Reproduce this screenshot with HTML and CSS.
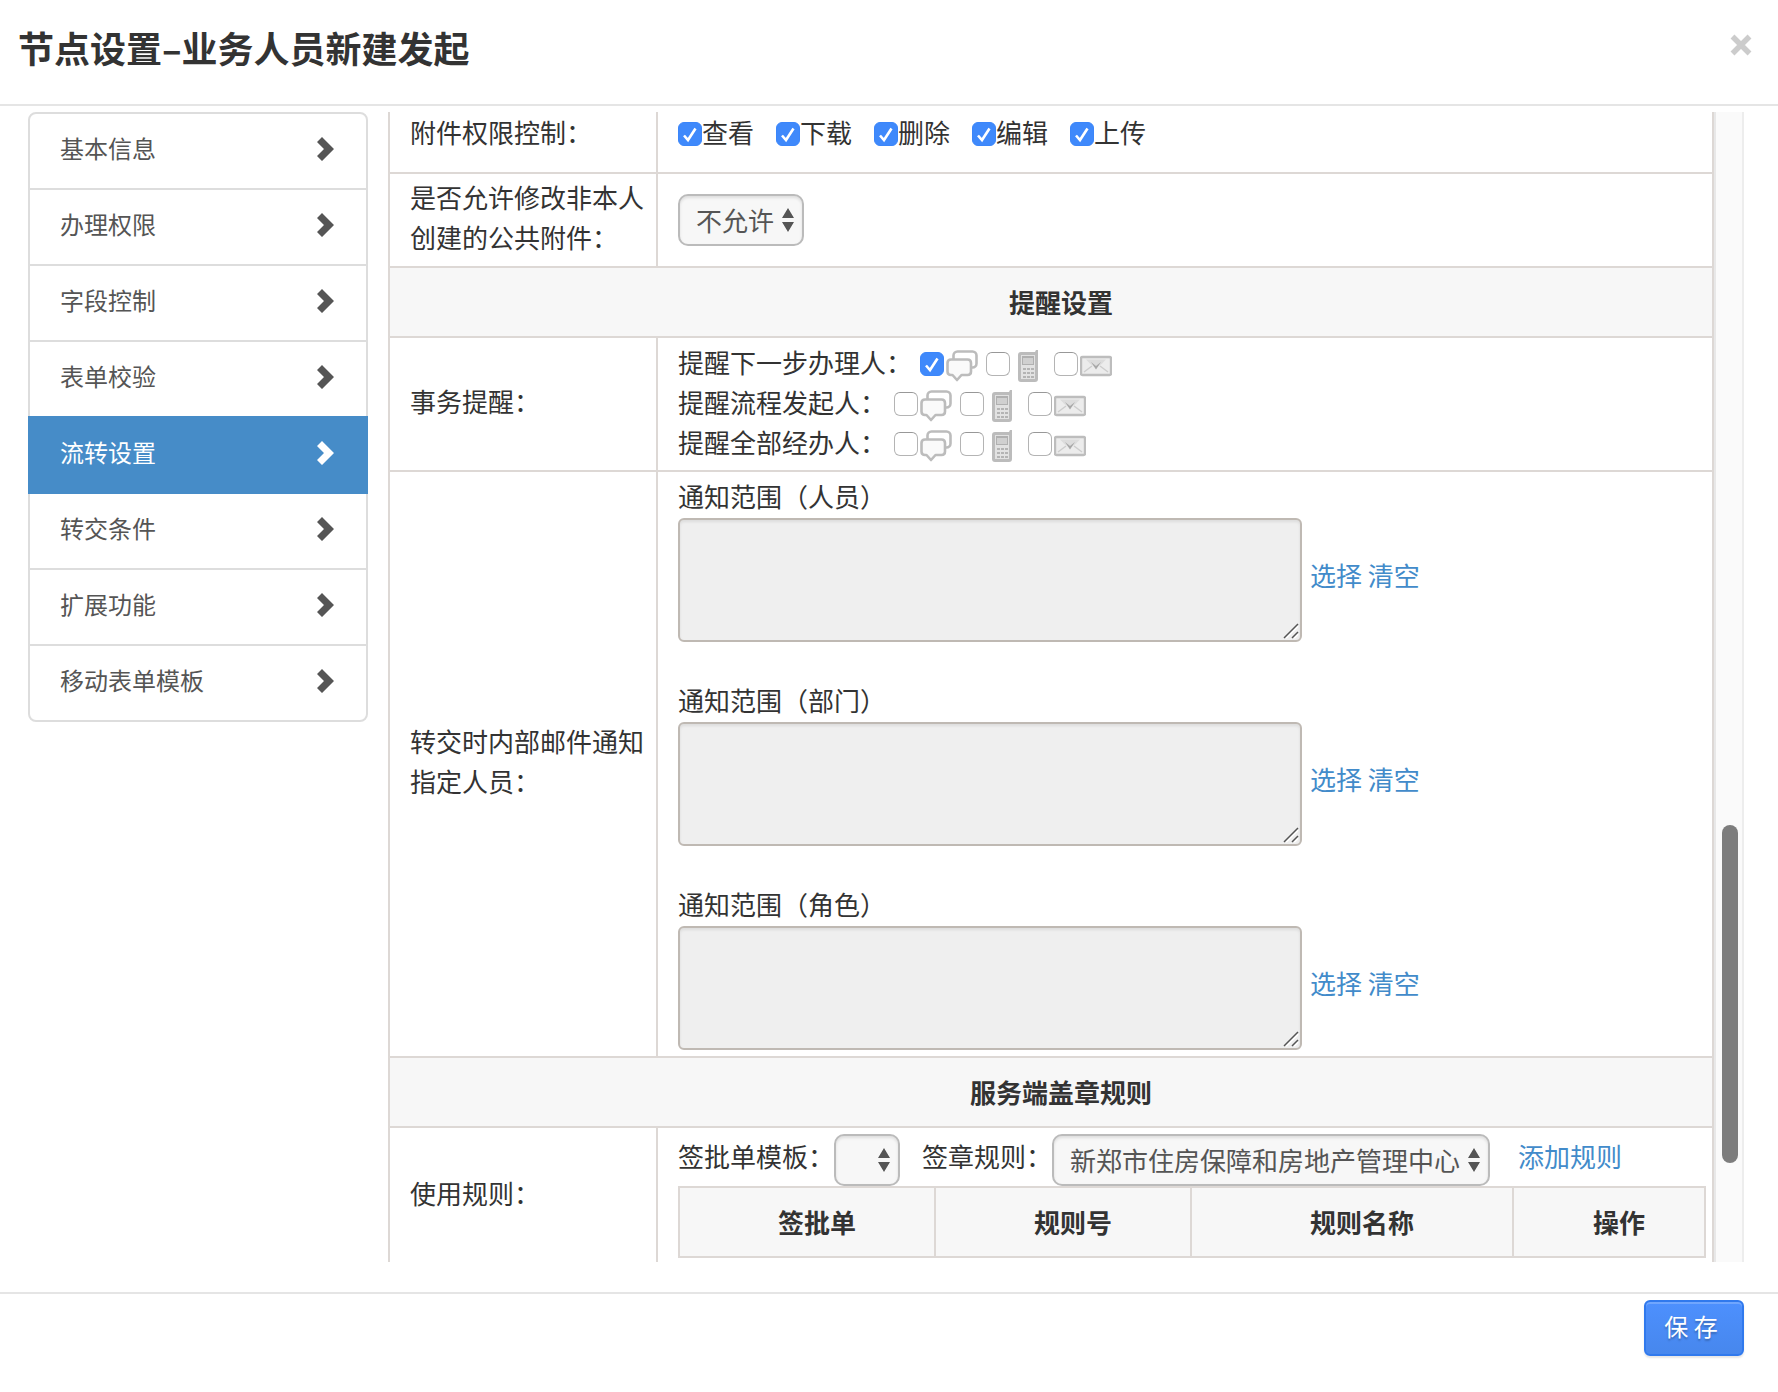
FILE: index.html
```html
<!DOCTYPE html>
<html lang="zh-CN">
<head>
<meta charset="utf-8">
<title>节点设置</title>
<meta name="viewport" content="width=device-width, initial-scale=1">
<link rel="stylesheet" href="styles.css">
</head>
<body>
<svg class="sprite" aria-hidden="true">
  <symbol id="chevron" viewBox="0 0 17 24"><path d="M0 5 5 0l12 12L5 24l-5-5 7-7z" fill="currentColor"/></symbol>
  <symbol id="bubbles" viewBox="0 0 32 32">
    <g fill="#fff" stroke="#bcbcbc" stroke-width="2.600" stroke-linejoin="round">
      <rect x="7.500" y="1.500" width="23" height="16" rx="4"/>
      <path fill="#fafafa" d="M5 9.500h16.500q3.500 0 3.500 3.500v8.500q0 3.500-3.500 3.500H15.500L11 30l-4.500-5H5q-3.500 0-3.500-3.500V13q0-3.500 3.500-3.500z"/>
    </g>
  </symbol>
  <symbol id="phone" viewBox="0 0 34 32">
    <path fill="#bcbcbc" d="M24 0h2v29q0 3-3 3H9q-3 0-3-3V5q0-3 3-3h14z"/>
    <path fill="#e2e2e2" d="M9 5h14v24H9z"/>
    <path fill="#b0b0b0" d="M10 6h12v9H10z"/><path fill="#d0d0d0" d="M11 8h10v6H11z"/>
    <path fill="#b4b4b4" d="M11 18h3v2h-3zm4 0h3v2h-3zm4 0h3v2h-3zm-8 4h3v2h-3zm4 0h3v2h-3zm4 0h3v2h-3zm-8 4h3v2h-3zm4 0h3v2h-3zm4 0h3v2h-3z"/>
  </symbol>
  <symbol id="mail" viewBox="0 0 32 32">
    <rect x="1" y="7" width="30" height="18" rx="1.500" fill="#ececec" stroke="#bdbdbd" stroke-width="2.400"/>
    <path d="M4 22l8-6M28 22l-8-6" stroke="#cdcdcd" stroke-width="1.500"/>
    <path d="M6 9.500h20q-4 5-10 8.500Q10 14.500 6 9.500z" fill="#dcdcdc"/>
    <path d="M11 12l5 4 5-4-5 7.500z" fill="#a8a8a8"/>
  </symbol>
  <symbol id="grip" viewBox="0 0 16 16">
    <path d="M3 15 15 3M11 15l4-4" stroke="#fff" stroke-width="2"/>
    <path d="M1 15 15 1M9 15l6-6" stroke="#555" stroke-width="1.500"/>
  </symbol>
</svg>

<div class="dialog">
  <header class="dialog-header">
    <h1>节点设置–业务人员新建发起</h1>
    <button class="close" type="button" aria-label="关闭"><svg width="22" height="22" viewBox="0 0 22 22"><path d="M2.500 2.500l17 17M19.500 2.500l-17 17" stroke="#ccc" stroke-width="5.500"/></svg></button>
  </header>

  <main class="dialog-body">
    <nav class="menu">
      <a href="#basic">基本信息<svg class="chevron"><use href="#chevron"/></svg></a>
      <a href="#rights">办理权限<svg class="chevron"><use href="#chevron"/></svg></a>
      <a href="#fields">字段控制<svg class="chevron"><use href="#chevron"/></svg></a>
      <a href="#verify">表单校验<svg class="chevron"><use href="#chevron"/></svg></a>
      <a href="#flow" class="active" aria-current="page">流转设置<svg class="chevron"><use href="#chevron"/></svg></a>
      <a href="#conditions">转交条件<svg class="chevron"><use href="#chevron"/></svg></a>
      <a href="#extend">扩展功能<svg class="chevron"><use href="#chevron"/></svg></a>
      <a href="#mobile">移动表单模板<svg class="chevron"><use href="#chevron"/></svg></a>
    </nav>

    <section class="pane">
      <table class="settings">
        <colgroup><col class="col-label"><col></colgroup>
        <tbody>
          <tr class="first">
            <th scope="row">附件权限控制：</th>
            <td>
              <div class="checks">
                <label><input type="checkbox" checked><span>查看</span></label>
                <label><input type="checkbox" checked><span>下载</span></label>
                <label><input type="checkbox" checked><span>删除</span></label>
                <label><input type="checkbox" checked><span>编辑</span></label>
                <label><input type="checkbox" checked><span>上传</span></label>
              </div>
            </td>
          </tr>
          <tr>
            <th scope="row"><label for="modify">是否允许修改非本人创建的公共附件：</label></th>
            <td><select id="modify" class="select-short"><option>不允许</option></select></td>
          </tr>
          <tr><th class="section" colspan="2">提醒设置</th></tr>
          <tr>
            <th scope="row">事务提醒：</th>
            <td>
              <div class="remind">
                <span class="caption">提醒下一步办理人：</span>
                <label><input type="checkbox" checked aria-label="站内消息"><svg class="icon"><use href="#bubbles"/></svg></label>
                <label><input type="checkbox" aria-label="手机短信"><svg class="icon icon-phone"><use href="#phone"/></svg></label>
                <label><input type="checkbox" aria-label="邮件"><svg class="icon"><use href="#mail"/></svg></label>
              </div>
              <div class="remind">
                <span class="caption">提醒流程发起人：</span>
                <label><input type="checkbox" aria-label="站内消息"><svg class="icon"><use href="#bubbles"/></svg></label>
                <label><input type="checkbox" aria-label="手机短信"><svg class="icon icon-phone"><use href="#phone"/></svg></label>
                <label><input type="checkbox" aria-label="邮件"><svg class="icon"><use href="#mail"/></svg></label>
              </div>
              <div class="remind">
                <span class="caption">提醒全部经办人：</span>
                <label><input type="checkbox" aria-label="站内消息"><svg class="icon"><use href="#bubbles"/></svg></label>
                <label><input type="checkbox" aria-label="手机短信"><svg class="icon icon-phone"><use href="#phone"/></svg></label>
                <label><input type="checkbox" aria-label="邮件"><svg class="icon"><use href="#mail"/></svg></label>
              </div>
            </td>
          </tr>
          <tr>
            <th scope="row">转交时内部邮件通知指定人员：</th>
            <td>
              <div class="notify-list">
                <div class="notify">
                  <label class="caption" for="users">通知范围（人员）</label>
                  <div class="notify-row">
                    <div class="area"><textarea id="users" readonly></textarea><svg class="grip"><use href="#grip"/></svg></div>
                    <div class="links"><a href="#pick-users">选择</a> <a href="#clear-users">清空</a></div>
                  </div>
                </div>
                <div class="notify">
                  <label class="caption" for="depts">通知范围（部门）</label>
                  <div class="notify-row">
                    <div class="area"><textarea id="depts" readonly></textarea><svg class="grip"><use href="#grip"/></svg></div>
                    <div class="links"><a href="#pick-depts">选择</a> <a href="#clear-depts">清空</a></div>
                  </div>
                </div>
                <div class="notify">
                  <label class="caption" for="roles">通知范围（角色）</label>
                  <div class="notify-row">
                    <div class="area"><textarea id="roles" readonly></textarea><svg class="grip"><use href="#grip"/></svg></div>
                    <div class="links"><a href="#pick-roles">选择</a> <a href="#clear-roles">清空</a></div>
                  </div>
                </div>
              </div>
            </td>
          </tr>
          <tr><th class="section" colspan="2">服务端盖章规则</th></tr>
          <tr>
            <th scope="row">使用规则：</th>
            <td>
              <div class="rule-bar">
                <div class="rule-field"><label class="caption" for="template">签批单模板：</label><select id="template" class="select-empty"><option></option></select></div>
                <div class="rule-field"><label class="caption" for="rule">签章规则：</label><select id="rule" class="select-long"><option>新郑市住房保障和房地产管理中心</option></select></div>
                <a class="caption add" href="#add-rule">添加规则</a>
              </div>
              <table class="rules">
                <colgroup><col class="col-sheet"><col class="col-sheet"><col class="col-name"><col></colgroup>
                <thead><tr><th class="section">签批单</th><th class="section">规则号</th><th class="section">规则名称</th><th class="section">操作</th></tr></thead>
              </table>
            </td>
          </tr>
        </tbody>
      </table>
      <div class="scrollbar" aria-hidden="true"><div class="thumb"></div></div>
    </section>
  </main>

  <footer class="dialog-footer"><button class="save" type="button">保 存</button></footer>
</div>
</body>
</html>
```

FILE: styles.css
```css
* { box-sizing: border-box; }

body {
  margin: 0;
  background: #fff;
  color: #333;
  font-family: "Noto Sans CJK SC", sans-serif;
  font-size: 26px;
  line-height: 40px;
}

a { color: #428bca; text-decoration: none; }
.sprite { position: absolute; width: 0; height: 0; }

.dialog { display: flex; flex-direction: column; height: 100vh; }

/* header */
.dialog-header {
  display: flex;
  flex: none;
  align-items: flex-start;
  justify-content: space-between;
  padding: 20px 26px 30px 18px;
  border-bottom: 2px solid #e5e5e5;
}
h1 { margin: 0; font-size: 36px; font-weight: 700; line-height: 54px; }
.close { display: flex; margin: 14px 0 0; padding: 0; border: 0; background: none; }

/* body */
.dialog-body {
  display: flex;
  flex: 1;
  gap: 20px;
  align-items: stretch;
  min-height: 0;
  padding: 6px 34px 30px 28px;
}

.menu { flex: none; width: 340px; }
.menu a {
  display: flex;
  align-items: center;
  justify-content: space-between;
  margin-bottom: -2px;
  padding: 16px 32px 22px 30px;
  border: 2px solid #ddd;
  color: #555;
  font-size: 24px;
  line-height: 36px;
}
.menu a:first-child { border-radius: 8px 8px 0 0; }
.menu a:last-child { border-radius: 0 0 8px 8px; }
.menu a.active {
  position: relative;
  border-color: #468cc8;
  background: #468cc8;
  color: #fff;
}
.chevron { width: 17px; height: 24px; margin-top: 2px; }

.pane { display: flex; flex: 1; align-items: flex-start; min-width: 0; overflow: hidden; }

.settings {
  flex: 1;
  width: 100%;
  border-left: 2px solid #ddd8d5;
  border-spacing: 0;
  table-layout: fixed;
}
.col-label { width: 268px; }
.settings th, .settings td {
  padding: 6px 6px 6px 20px;
  border-right: 2px solid #ddd8d5;
  border-bottom: 2px solid #ddd8d5;
  text-align: left;
  vertical-align: middle;
}
.settings th { padding: 3px 6px 9px 20px; font-weight: 400; }
.settings .first th { padding-top: 0; padding-bottom: 20px; }
.settings .first td { padding-top: 0; padding-bottom: 20px; }
.settings .section {
  padding: 14px 0 14px 20px;
  background: #f7f7f7;
  font-weight: 700;
  text-align: center;
}

/* controls */
input[type="checkbox"] {
  flex: none;
  width: 24px;
  height: 24px;
  margin: 0;
  border: 1px solid #b4b4b4;
  border-top-color: #989898;
  border-radius: 6px;
  background: #fff;
  appearance: none;
}
input[type="checkbox"]:checked {
  border-color: #3b86fa;
  background: #3f89fb url("data:image/svg+xml,%3Csvg xmlns='http://www.w3.org/2000/svg' viewBox='0 0 22 22'%3E%3Cpath d='M5 12.500 9 17 16.500 5.500' fill='none' stroke='white' stroke-width='2.600'/%3E%3C/svg%3E") center / 22px 22px no-repeat;
}

select {
  display: block;
  height: 52px;
  padding: 0 0 0 16px;
  border: 2px solid #bbb;
  border-radius: 10px;
  background: #f7f7f7 url("data:image/svg+xml,%3Csvg xmlns='http://www.w3.org/2000/svg' viewBox='0 0 12 24'%3E%3Cpath d='M0 10 6 0l6 10zM0 14h12L6 24z' fill='%23555'/%3E%3C/svg%3E") right 8px center / 12px 24px no-repeat;
  box-shadow: inset 0 2px 3px rgba(0, 0, 0, .1);
  color: #555;
  font: inherit;
  appearance: none;
}
.select-short { width: 126px; }
.select-empty { width: 66px; }
.select-long { width: 438px; }

.checks, .checks label, .remind, .remind label, .notify-row, .rule-bar, .rule-field {
  display: flex;
  align-items: center;
}
.checks { gap: 22px; }
.checks input { margin-top: 4px; }
.caption { padding-bottom: 4px; line-height: 36px; }

.remind { gap: 8px; }
.remind label { gap: 2px; height: 40px; }
.icon { width: 32px; height: 32px; margin-top: 4px; }
.icon-phone { width: 34px; }

/* notification ranges */
.notify-list { display: flex; flex-direction: column; gap: 40px; }
.notify .caption { display: block; }
.notify-row { gap: 8px; }
.area { position: relative; width: 624px; height: 124px; }
textarea {
  display: block;
  width: 100%;
  height: 100%;
  border: 2px solid #bfb9b3;
  border-radius: 6px;
  background: #efefef;
  box-shadow: inset 0 2px 3px rgba(0, 0, 0, .08);
  font: inherit;
  resize: none;
}
.grip { position: absolute; right: 3px; bottom: 3px; width: 16px; height: 16px; }
.links { padding-bottom: 10px; }

/* stamp rules */
.rule-bar { gap: 22px; }
.rule-bar .caption { padding-bottom: 8px; }
.add { padding-left: 6px; }
.rules {
  width: 100%;
  border-top: 2px solid #ddd8d5;
  border-left: 2px solid #ddd8d5;
  border-spacing: 0;
  table-layout: fixed;
}
.col-sheet { width: 256px; }
.col-name { width: 322px; }

.scrollbar {
  position: relative;
  flex: none;
  align-self: stretch;
  width: 30px;
  border-right: 2px solid #ededed;
  border-left: 2px solid #e8e8e8;
  background: #fafafa;
}
.thumb {
  position: absolute;
  top: 62%;
  left: 6px;
  width: 16px;
  height: 338px;
  border-radius: 8px;
  background: #7d7d7d;
}

/* footer */
.dialog-footer {
  display: flex;
  flex: none;
  justify-content: flex-end;
  padding: 6px 34px 36px;
  border-top: 2px solid #e5e5e5;
}
.save {
  width: 100px;
  height: 56px;
  padding: 0 6px 4px 0;
  border: 2px solid #3079ed;
  border-radius: 6px;
  background: linear-gradient(#4d90fe, #4787ed);
  box-shadow: inset 0 2px 0 rgba(255, 255, 255, .2), 0 2px 2px rgba(0, 0, 0, .1);
  color: #fff;
  font: inherit;
  font-size: 24px;
  text-shadow: 0 2px 2px rgba(0, 0, 0, .25);
}
```
